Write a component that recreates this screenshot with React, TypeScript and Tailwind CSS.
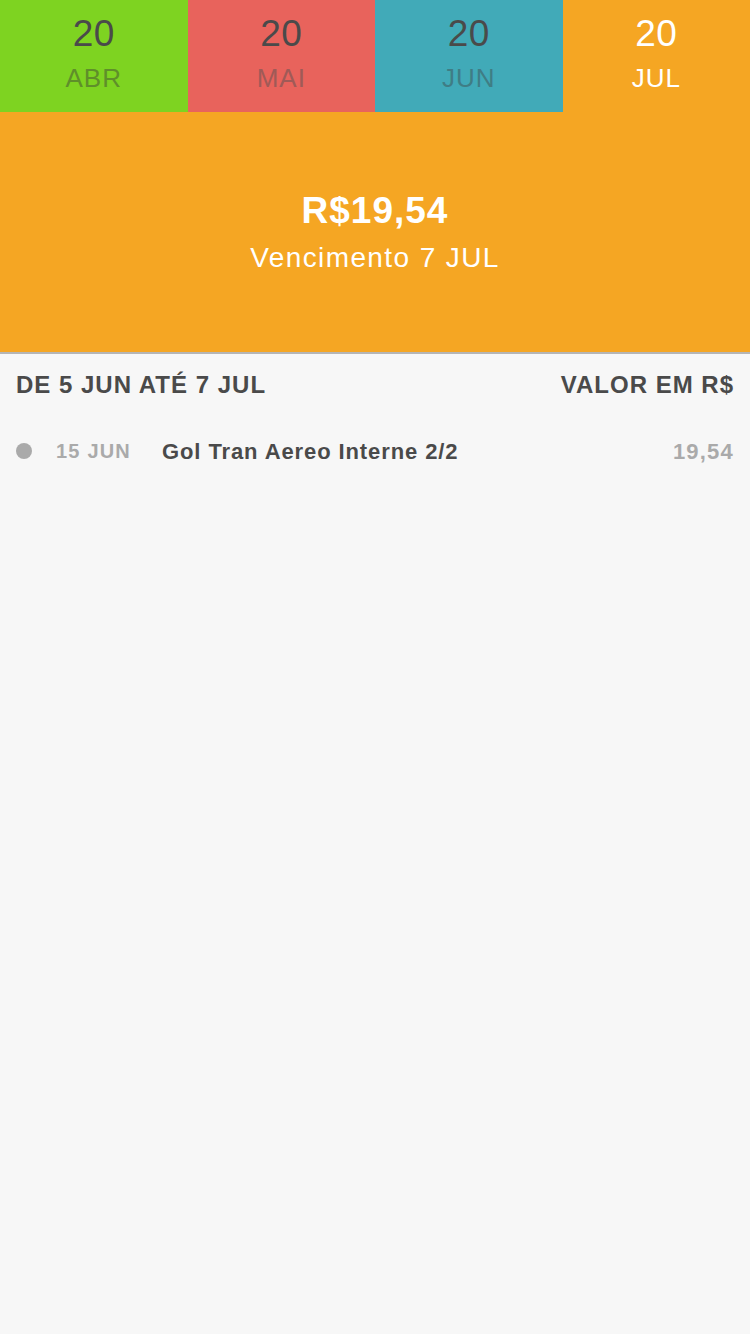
const MONTHS = [
  { day: "20", label: "ABR", bg: "bg-[#7ed321]", num: "text-[#4a4a4a]", month: "text-[#5f8f2a]" },
  { day: "20", label: "MAI", bg: "bg-[#e8635c]", num: "text-[#4a4a4a]", month: "text-[#a05a57]" },
  { day: "20", label: "JUN", bg: "bg-[#41aab8]", num: "text-[#4a4a4a]", month: "text-[#3f7d85]" },
  { day: "20", label: "JUL", bg: "bg-[#f5a623]", num: "text-white", month: "text-white" },
];

const ROWS = [{ date: "15 JUN", desc: "Gol Tran Aereo Interne 2/2", value: "19,54" }];

export default function App() {
  return (
    <div className="min-h-[1334px] w-[750px] bg-[#f7f7f7] font-['Liberation_Sans',Arial,sans-serif]">
      <div className="grid h-[112px] grid-cols-4">
        {MONTHS.map((m) => (
          <div key={m.label} className={`flex flex-col items-center pt-[12px] ${m.bg}`}>
            <span className={`text-[37px] leading-[44px] tracking-[0.5px] ${m.num}`}>{m.day}</span>
            <span className={`mt-[7px] text-[26px] leading-[30px] tracking-[1px] ${m.month}`}>{m.label}</span>
          </div>
        ))}
      </div>

      <div className="flex h-[240px] flex-col items-center bg-[#f5a623] pt-[78px] text-white">
        <span className="text-[37px] font-bold leading-[42px] tracking-[1px]">R$19,54</span>
        <span className="mt-[10px] text-[28px] leading-[32px] tracking-[1.4px]">Vencimento 7 JUL</span>
      </div>
      <div className="h-[2px] bg-[#b5b5b5]" />

      <div className="flex items-center justify-between px-[16px] pt-[17px] text-[24px] font-bold leading-[28px] tracking-[1px] text-[#4a4a4a]">
        <span>DE 5 JUN ATÉ 7 JUL</span>
        <span>VALOR EM R$</span>
      </div>

      <div className="mt-[38px]">
        {ROWS.map((r) => (
          <div key={r.desc} className="flex h-[28px] items-center px-[16px]">
            <span className="size-[16px] rounded-full bg-[#aaaaaa]" />
            <span className="ml-[24px] w-[106px] text-[20px] font-bold tracking-[1.2px] text-[#aaaaaa]">{r.date}</span>
            <span className="flex-1 text-[22px] font-bold tracking-[0.9px] text-[#4a4a4a]">{r.desc}</span>
            <span className="text-[22px] font-bold tracking-[1.2px] text-[#aaaaaa]">{r.value}</span>
          </div>
        ))}
      </div>
    </div>
  );
}
